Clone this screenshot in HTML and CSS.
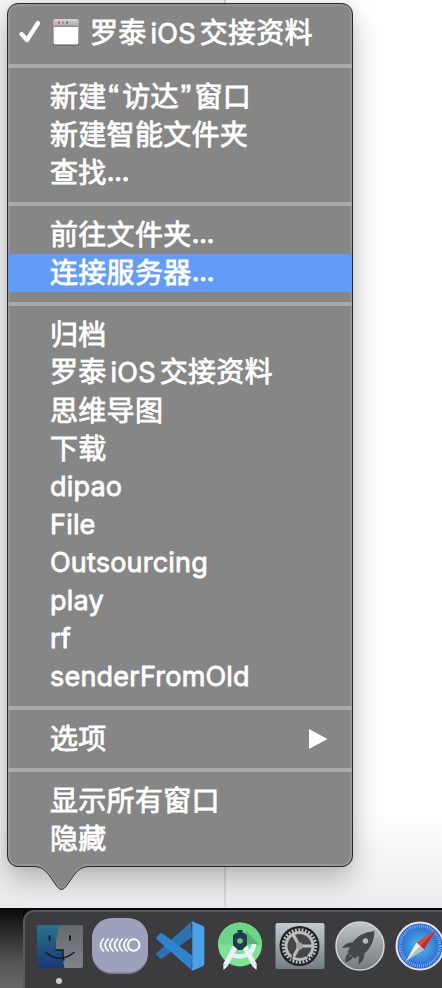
FILE: index.html
```html
<!DOCTYPE html>
<html lang="zh-CN">
<head>
<meta charset="utf-8">
<title>访达</title>
<link rel="stylesheet" href="styles.css">
</head>
<body>
<main class="desktop">
  <nav class="menu">
    <div class="item current">
      <svg class="check" width="26" height="26" viewBox="0 0 26 26"><path d="M3.500 15 L9 21 L20 4" fill="none" stroke="#fff" stroke-width="4.400" stroke-linecap="round" stroke-linejoin="round"/></svg>
      <svg class="window" width="28" height="28" viewBox="0 0 28 28">
        <defs><linearGradient id="bar" x2="0" y2="1"><stop stop-color="#d4d4d4"/><stop offset="1" stop-color="#aaa"/></linearGradient></defs>
        <rect x="1" y="1.500" width="26" height="26" rx="2" fill="#555"/><rect x="1.500" y="1.500" width="25" height="25" rx="1.500" fill="#fff"/>
        <path d="M1.500 8V3q0-2 2-2h21q2 0 2 2v5z" fill="url(#bar)"/><path d="M1.500 8.300h25" stroke="#777"/>
        <path d="M6 4.500h2" stroke="#e04444" stroke-width="2"/><path d="M10 4.500h2" stroke="#d58424" stroke-width="2"/><path d="M14 4.500h2" stroke="#488c2c" stroke-width="2"/>
      </svg>
      <span>罗泰<span class="latin mid">iOS</span>交接资料</span>
    </div>
    <hr>
    <div class="item"><span>新建<span class="quote">“</span>访达<span class="quote">”</span>窗口</span></div>
    <div class="item">新建智能文件夹</div>
    <div class="item">查找<span class="dots">...</span></div>
    <hr>
    <div class="item">前往文件夹<span class="dots">...</span></div>
    <div class="item selected">连接服务器<span class="dots">...</span></div>
    <hr>
    <div class="item">归档</div>
    <div class="item"><span>罗泰<span class="latin mid">iOS</span>交接资料</span></div>
    <div class="item">思维导图</div>
    <div class="item">下载</div>
    <div class="item latin">dipao</div>
    <div class="item latin">File</div>
    <div class="item latin">Outsourcing</div>
    <div class="item latin">play</div>
    <div class="item latin">rf</div>
    <div class="item latin">senderFromOld</div>
    <hr>
    <div class="item">选项<svg class="arrow" width="19" height="20" viewBox="0 0 19 20"><path d="M0 0 18.500 10 0 20z" fill="#fff"/></svg></div>
    <hr>
    <div class="item">显示所有窗口</div>
    <div class="item">隐藏</div>
    <svg class="tail" width="60" height="30" viewBox="0 -2 60 30">
      <path d="M8-2V2C12 4 14 6 17 10L25 21.500Q29.500 27.500 34 21.500L42 10C45 6 47 4 51 2V-2z" fill="#868686"/>
      <path d="M0 .5C10 .5 13 4 18 10L26 21Q29.500 25 33 21L41 10C46 4 49 .5 59 .5" fill="none" stroke="#929292" stroke-width="1.500"/>
      <path d="M0 1.500C9 1.500 12 4 17 10L25 21.500Q29.500 27.500 34 21.500L42 10C47 4 50 1.500 59 1.500" fill="none" stroke="#303030"/>
    </svg>
  </nav>
  <footer class="screen-edge">
    <div class="dock">
      <div class="app running">
        <svg width="48" height="48" viewBox="0 0 48 48">
          <defs><linearGradient id="finder" x2="0" y2="1"><stop stop-color="#2b7188"/><stop offset="1" stop-color="#173a79"/></linearGradient><linearGradient id="face" x2="0" y2="1"><stop stop-color="#66696c"/><stop offset="1" stop-color="#808488"/></linearGradient></defs>
          <rect x="1" y="3" width="46" height="43" rx="2" fill="url(#finder)"/>
          <path d="M24 3h21q2 0 2 2v39q0 2-2 2H28.500Q26.500 39 27 28H20Q19.500 13 24 3z" fill="url(#face)"/>
          <path d="M13.500 14v4M34 14v4" stroke="#16202c" stroke-width="2" stroke-linecap="round"/>
          <path d="M10 30.500q13.500 11.500 28 0M20 28h7q-.5 6 .8 10" fill="none" stroke="#15191f" stroke-width="1.500" stroke-linecap="round"/>
        </svg>
      </div>
      <div class="app">
        <svg width="56" height="56" viewBox="0 0 56 56"><rect x="0" y="1" width="56" height="55" rx="20" fill="#757b99"/><rect width="56" height="54.500" rx="20" fill="#9da1bb"/>
          <g fill="none" stroke="#fff" stroke-width="1.700"><circle cx="41.700" cy="27" r="5.800" stroke-width="2"/><path d="M12 20.500q-7 6.500 0 13M16.700 20.500q-7 6.500 0 13M21.400 20.500q-7 6.500 0 13M26.100 20.500q-7 6.500 0 13M30.800 20.500q-7 6.500 0 13M35.500 20.500q-7 6.500 0 13"/></g></svg>
      </div>
      <div class="app">
        <svg width="50" height="50" viewBox="0 0 50 50">
          <path d="M1.500 32 36 1l1 15L7 37.500q-1.500.8-2.500-.5l-3-3q-1-.9 0-2z" fill="#2c72b2"/>
          <path d="M1.500 16 5 12.500q1-1 2.500 0L37 34.500 36.500 49 1.500 18q-1-1 0-2z" fill="#2f83d0"/>
          <path d="M36 1q1-1 2.500-.3L48 5q1.300.6 1.300 2v36q0 1.500-1.300 2l-10 4.400q-1.300.3-2-.4 1.300-.5 1.300-2V3q0-1.500-1.300-2z" fill="#4aa2ea"/>
        </svg>
      </div>
      <div class="app">
        <svg width="46" height="50" viewBox="0 0 46 50">
          <circle cx="23" cy="23.500" r="22" fill="#7be393"/><path d="M1 23.500a22 22 0 0 1 44 0z" fill="#6cd588"/><path d="M29 10 42 23.500H29z" fill="#56b577"/>
          <path d="M18 26 8.500 44M28 26l9.500 18" stroke="#eaf2f7" stroke-width="5"/><path d="M6.300 42.800 10.700 45.200 6.500 49zM39.700 42.800 35.300 45.200 39.500 49z" fill="#eaf2f7"/>
          <path d="M14 33.500C24 38 36 34.500 37 23" fill="none" stroke="#eaf2f7" stroke-width="4.500"/>
          <path d="M20.500 9h5v3h2l2.500 2.500V24l-5 5h-4l-5-5v-9.500l2.500-2.500h2z" fill="#233b4d"/><circle cx="23" cy="20" r="2.800" fill="#69c987"/>
        </svg>
      </div>
      <div class="app">
        <svg width="50" height="48" viewBox="0 0 50 48">
          <defs><linearGradient id="steel" x2="0" y2="1"><stop stop-color="#c4ccd0"/><stop offset="1" stop-color="#747d82"/></linearGradient></defs>
          <rect x=".5" y="1" width="49" height="46" rx="2.500" fill="url(#steel)"/><circle cx="24.500" cy="24" r="20" fill="#222325"/>
          <circle cx="24.500" cy="24" r="16.300" fill="none" stroke="#bbb" stroke-width="3" stroke-dasharray="2 1.410"/>
          <circle cx="24.500" cy="24" r="13.500" fill="#464646" stroke="#bcbcbc" stroke-width="3"/>
          <path d="M24.500 24 17.500 11.500M24.500 24h14M24.500 24l-7 12.500" stroke="#bdbdb9" stroke-width="3.200"/><circle cx="24.500" cy="24" r="3.500" fill="#a4a4a2"/><path d="M9 34.500q6 6 9-1M31 33q3 5 8.500 1" fill="none" stroke="#222" stroke-width="1.500" stroke-dasharray="1.500 1"/>
        </svg>
      </div>
      <div class="app">
        <svg width="50" height="50" viewBox="0 0 50 50">
          <defs><linearGradient id="disc" x2="0" y2="1"><stop stop-color="#bec5c9"/><stop offset="1" stop-color="#76797b"/></linearGradient></defs>
          <circle cx="25" cy="25" r="24" fill="url(#disc)" stroke="#d0d5d7" stroke-width="1.500"/>
          <path d="M39.500 10C28 11.500 22 15.500 17.500 21.500Q11 21 7 27l8-.8-2.500 4.800 7 6.500 4.500-2.500-.5 8.500q6-4 6-11C35.500 27 39 21 39.500 10z" fill="#43474b"/><circle cx="30.500" cy="20" r="2.800" fill="#b1b7bb"/><path d="M14 32q-4 2-4 9.500Q16.500 40 18 35.500l-1.500-.7-2 1.500.8-3z" fill="#43474b"/>
        </svg>
      </div>
      <div class="app">
        <svg width="50" height="50" viewBox="0 0 50 50">
          <defs><radialGradient id="sea"><stop stop-color="#4dc0e5"/><stop offset="1" stop-color="#2960cf"/></radialGradient></defs>
          <circle cx="25" cy="25" r="23.500" fill="url(#sea)" stroke="#e3e5e6" stroke-width="2"/>
          <circle cx="25" cy="25" r="20" fill="none" stroke="#9ac8ee" stroke-width="3" stroke-dasharray=".7 1.400"/>
          <path d="M40.500 9.500 21.500 21.500l7.500 7z" fill="#e4453d"/><path d="M40.500 9.500 25 25l4 3.500z" fill="#bc302f"/><path d="M11 40 21.500 21.500l7.500 7z" fill="#eee"/><path d="M11 40 25 25l4 3.500z" fill="#bbb"/>
        </svg>
      </div>
    </div>
  </footer>
</main>
</body>
</html>
```
FILE: styles.css
```css
* { box-sizing: border-box; }
body { margin: 0; }
.desktop {
  width: 442px; height: 988px; overflow: hidden;
  display: flex; flex-direction: column; justify-content: space-between;
  padding-top: 3px;
  background: linear-gradient(90deg, transparent 224px, #d8d8d8 224px 226px, transparent 226px),
    linear-gradient(180deg, transparent 810px, #ebebeb 908px),
    linear-gradient(90deg, #f5f5f5 224px, #fff 226px);
}
.menu {
  position: relative;
  width: 346px; height: 864px; margin-left: 7px; padding: 12px 0 0;
  border: 1px solid #292929; border-radius: 11px;
  background: #868686;
  box-shadow: inset 0 0 0 2px #959595, 0 12px 28px rgba(0,0,0,.26), 0 0 10px rgba(0,0,0,.06);
  color: #fff;
  font-family: "Noto Sans CJK SC", sans-serif;
  font-size: 28px; line-height: 36px;
  font-weight: 400;
  letter-spacing: .3px;
}
.item { display: flex; align-items: center; height: 38px; padding: 0 24px 4px 42px; white-space: pre; -webkit-text-stroke: .8px #fff; }
.current { padding-left: 10px; padding-bottom: 5px; }
.check { margin-right: 8px; margin-top: -1px; }
.window { margin-right: 10px; margin-top: -2px; }
.selected { background: #629cf8; }
.latin { font-family: "Inter", sans-serif; font-size: 27px; letter-spacing: .2px; -webkit-text-stroke-width: .8px; }
.item.latin { padding-bottom: 0; }
.mid { margin: 0 4px 0 4px; }
.quote { font-family: "Liberation Sans", sans-serif; margin: 0 3px 0 2px; font-size: 31px; line-height: 30px; }
.dots { font-family: "Inter", sans-serif; letter-spacing: -.6px; }
.menu hr { height: 4px; margin: 10px 0; border: 0; background: #aaa; }
.arrow { margin-left: auto; margin-top: 4px; }
.tail { position: absolute; left: 24px; top: 859px; }
.screen-edge { height: 80px; padding-left: 23px; border-top: 2px solid #030508; background: linear-gradient(90deg, #0000 0 23px, #050608 23px), linear-gradient(#0c0c0d, #555755 70%, #676967); }
.dock { display: flex; align-items: center; width: 440px; height: 90px; padding: 0 0 18px 5px; border: 2px solid #59595b; border-radius: 11px; background: #3c3c3e; }
.app { position: relative; flex: 0 0 60px; height: 60px; display: flex; align-items: center; justify-content: center; }
.running::after { content: ""; position: absolute; left: 26px; top: 62px; width: 6px; height: 6px; border-radius: 50%; background: #ccc; }
```
